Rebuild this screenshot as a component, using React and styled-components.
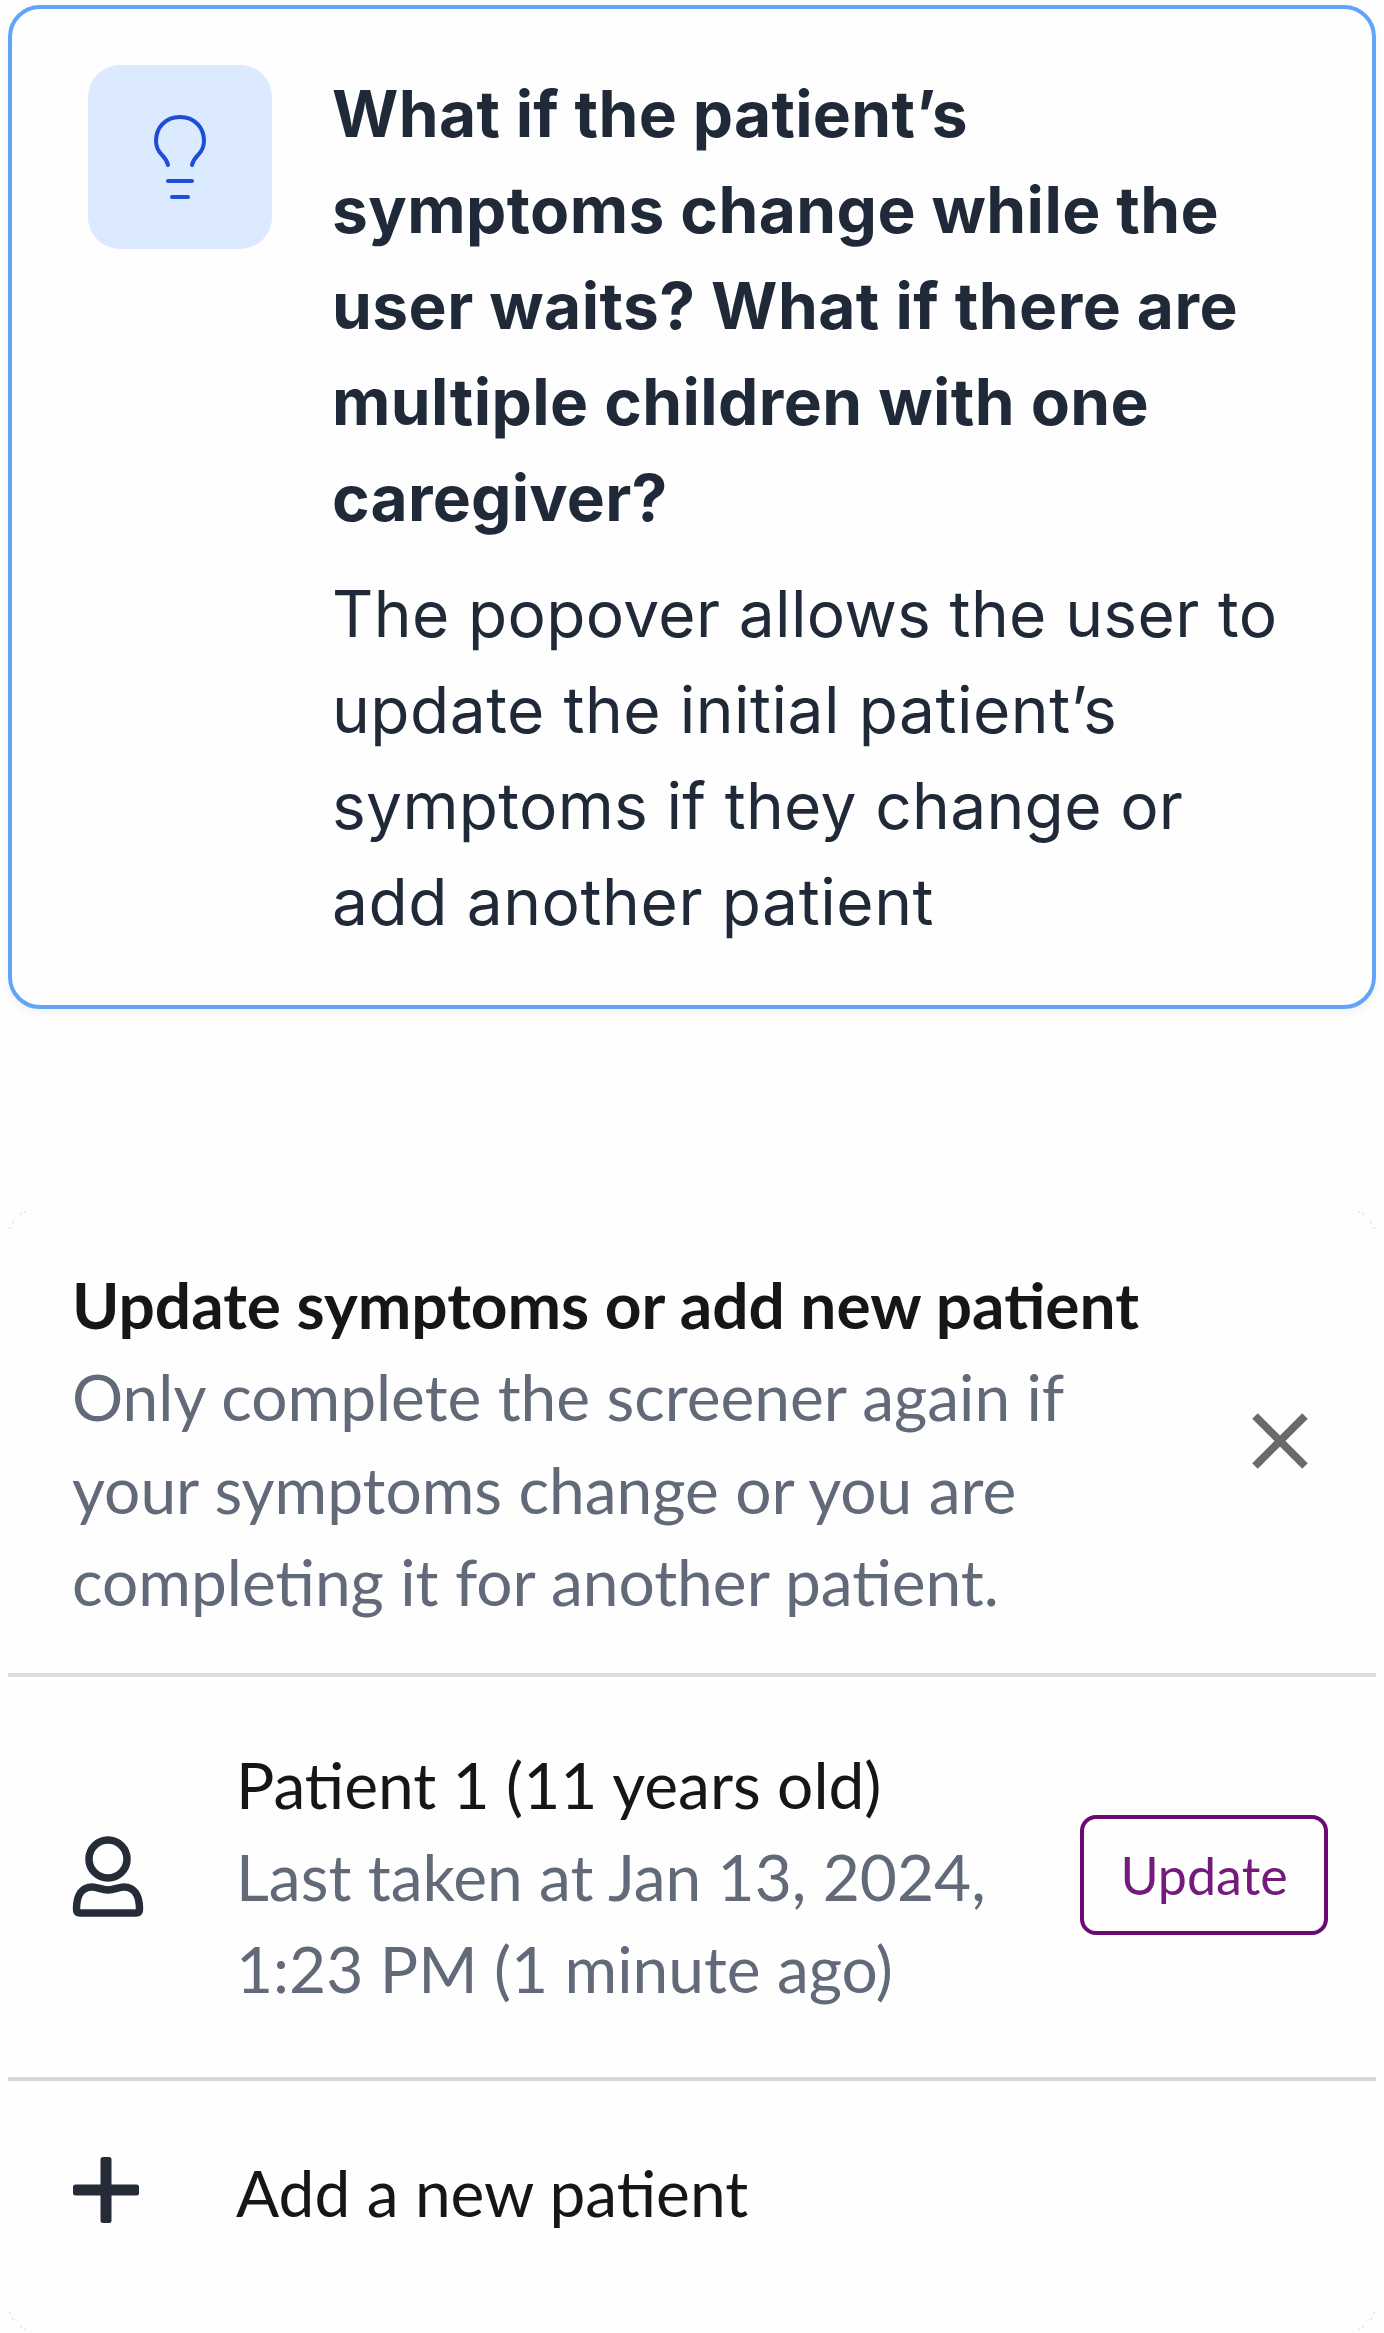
import React from "react";
import styled, { createGlobalStyle } from "styled-components";

const GlobalStyle = createGlobalStyle`
  *, *::before, *::after { box-sizing: border-box; }
  body { margin: 0; background: #fefefe; }
  h2, p { margin: 0; font-size: inherit; font-weight: inherit; }
`;

const Page = styled.main`
  display: flex;
  flex-direction: column;
  gap: 199px;
  height: 2333px;
  overflow: hidden;
  padding: 5px 8px 0;
`;

const InsightCard = styled.section`
  display: flex;
  align-items: flex-start;
  gap: 60px;
  height: 1004px;
  padding: 56px 76px;
  border: 4px solid #60a5fa;
  border-radius: 32px;
  background: #fefefe;
  box-shadow: 0 4px 8px rgba(0, 0, 0, 0.05);
`;

const IconTile = styled.div`
  display: flex;
  flex: none;
  align-items: center;
  justify-content: center;
  width: 184px;
  height: 184px;
  border-radius: 32px;
  background: #dbeafe;
`;

const InsightCopy = styled.div`
  display: flex;
  flex-direction: column;
  gap: 20px;
  padding-top: 1px;
  font: 400 64px/96px Inter, sans-serif;
  color: #1f2937;
  white-space: nowrap;
`;

const InsightTitle = styled.h2`
  font-weight: 700;
`;

const InsightText = styled.p`
  font-weight: 400;
`;

const Line = styled.span`
  display: block;
  letter-spacing: ${(p) => p.$tracking}px;
`;

const Popover = styled.section`
  position: relative;
  display: flex;
  flex-direction: column;
  height: 1125px;
  border-radius: 32px;
  background: #fefefe;
  font: 400 64px/92.3px Lato, sans-serif;
  color: #161616;
  white-space: nowrap;
`;

const Corner = styled.svg`
  position: absolute;
  top: ${(p) => (p.$bottom ? "auto" : "0")};
  bottom: ${(p) => (p.$bottom ? "0" : "auto")};
  left: ${(p) => (p.$right ? "auto" : "0")};
  right: ${(p) => (p.$right ? "0" : "auto")};
  transform: scale(${(p) => (p.$right ? -1 : 1)}, ${(p) => (p.$bottom ? -1 : 1)});
`;

const PopoverRow = styled.div`
  display: flex;
  align-items: center;
  height: ${(p) => p.$height}px;
  padding: ${(p) => p.$padding};
  border-bottom: ${(p) => (p.$last ? "0" : "4px solid " + p.$rule)};
`;

const Copy = styled.div`
  flex: 1;
  padding-top: ${(p) => p.$drop || 0}px;
`;

const PopoverTitle = styled.h2`
  font-weight: 700;
`;

const Muted = styled.p`
  color: #626a79;
`;

const Leading = styled.div`
  display: flex;
  flex: none;
  width: ${(p) => p.$width}px;
`;

const IconButton = styled.button`
  display: flex;
  padding: 0;
  border: 0;
  background: none;
`;

const UpdateButton = styled.button`
  width: 248px;
  height: 120px;
  margin-bottom: 4px;
  padding: 0;
  border: 4px solid #6b0a72;
  border-radius: 16px;
  background: #fefefe;
  color: #731a7c;
  font: 400 52px/80px Lato, sans-serif;
`;

const titleLines = [
  ["What if the patient’s", 0.33],
  ["symptoms change while the", 0.42],
  ["user waits? What if there are", 0.46],
  ["multiple children with one", 0.43],
  ["caregiver?", 0.25],
];

const textLines = [
  ["The popover allows the user to", 0.36],
  ["update the initial patient’s", 0.53],
  ["symptoms if they change or", 0.33],
  ["add another patient", 0.59],
];

function Lines({ lines }) {
  return lines.map(([text, tracking]) => (
    <Line key={text} $tracking={tracking}>
      {text}
    </Line>
  ));
}

function BulbIcon() {
  return (
    <svg width="96" height="96" viewBox="0 0 96 96" fill="none" stroke="#1d4ed8" strokeWidth="4" strokeLinecap="round">
      <path d="M36 56C35 52 33 49 30 46C26 42 24 37 24 32C24 18 34 8 48 8C62 8 72 18 72 32C72 37 70 42 66 46C63 49 61 52 60 56" />
      <path d="M36 72H60M40 88H56" />
    </svg>
  );
}

function CloseIcon() {
  return (
    <svg width="56" height="56" viewBox="0 0 56 56" stroke="#6a6a6a" strokeWidth="7.8">
      <path d="M3 3L53 53M53 3L3 53" />
    </svg>
  );
}

function UserIcon() {
  return (
    <svg width="72" height="82" viewBox="0 0 72 82" fill="none" stroke="#252b37" strokeWidth="7.5" strokeLinejoin="round">
      <circle cx="36" cy="23" r="19" />
      <path d="M4.5 73C4.5 58 11 51 20 51C26 51 29 54 36 54C43 54 46 51 52 51C61 51 67.5 58 67.5 73Q67.5 77 64 77H8Q4.5 77 4.5 73Z" />
    </svg>
  );
}

function PlusIcon() {
  return (
    <svg width="66" height="66" viewBox="0 0 66 66" fill="#252b37">
      <rect x="27.5" y="0" width="11" height="66" rx="2.5" />
      <rect x="0" y="27.5" width="66" height="11" rx="2.5" />
    </svg>
  );
}

function CornerMark({ right, bottom }) {
  return (
    <Corner $right={right} $bottom={bottom} width="32" height="32" viewBox="0 0 32 32" fill="none" stroke="#cfcfcf" strokeWidth="1" aria-hidden="true">
      <path d="M1.5 21A31 31 0 0 1 21 2" strokeDasharray="2 4 3 9 2 2.5" />
    </Corner>
  );
}

export default function App() {
  return (
    <>
      <GlobalStyle />
      <Page>
        <InsightCard>
          <IconTile>
            <BulbIcon />
          </IconTile>
          <InsightCopy>
            <InsightTitle>
              <Lines lines={titleLines} />
            </InsightTitle>
            <InsightText as="div">
              <Lines lines={textLines} />
            </InsightText>
          </InsightCopy>
        </InsightCard>
        <Popover>
          <CornerMark />
          <CornerMark right />
          <CornerMark bottom />
          <CornerMark right bottom />
          <PopoverRow $height={469} $padding="0 68px 0 64px" $rule="#dcdcdc">
            <Copy $drop={6}>
              <PopoverTitle>Update symptoms or add new patient</PopoverTitle>
              <Muted>
                Only complete the screener again if<br />your symptoms change or you are<br />completing it for another patient.
              </Muted>
            </Copy>
            <IconButton aria-label="Close">
              <CloseIcon />
            </IconButton>
          </PopoverRow>
          <PopoverRow $height={404} $padding="0 48px 0 64px" $rule="#d5d7dc">
            <Leading $width={164}>
              <UserIcon />
            </Leading>
            <Copy>
              <p>Patient 1 (11 years old)</p>
              <Muted>
                Last taken at Jan 13, 2024,<br />1:23 PM (1 minute ago)
              </Muted>
            </Copy>
            <UpdateButton>Update</UpdateButton>
          </PopoverRow>
          <PopoverRow $height={218} $padding="0 65px" $last>
            <Leading $width={163}>
              <PlusIcon />
            </Leading>
            <Copy $drop={6}>
              <p>Add a new patient</p>
            </Copy>
          </PopoverRow>
        </Popover>
      </Page>
    </>
  );
}
